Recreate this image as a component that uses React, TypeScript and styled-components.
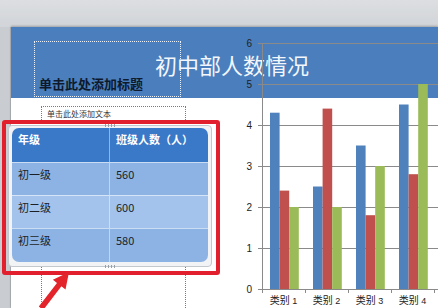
import React from "react";
import styled, { createGlobalStyle } from "styled-components";

const GlobalStyle = createGlobalStyle`
  html, body {
    margin: 0;
    padding: 0;
  }
  body {
    font-family: "Noto Sans CJK SC", "Liberation Sans", sans-serif;
    background: #d3d6da;
  }
  * {
    box-sizing: border-box;
  }
`;

const Page = styled.div`
  position: relative;
  width: 438px;
  height: 308px;
  overflow: hidden;
  display: flex;
  flex-direction: column;
  background: #d3d6da;
`;

const TopBand = styled.div`
  flex: none;
  height: 27px;
  background: linear-gradient(#dcdee1, #d1d4d8);
`;

const Workspace = styled.div`
  flex: 1;
  display: flex;
  min-height: 0;
`;

const SideStrip = styled.div`
  flex: none;
  width: 11px;
  background: #c9ccd0;
  border-right: 1px solid #b3b7bc;
`;

const Slide = styled.div`
  position: relative;
  flex: 1;
  display: flex;
  flex-direction: column;
  background: #ffffff;
  box-shadow: 0 -1px 2px rgba(0, 0, 0, 0.25);
`;

const TitleBar = styled.div`
  flex: none;
  height: 71px;
  display: grid;
  background: #4a7ebc;
`;

const TitlePlaceholder = styled.div`
  grid-area: 1 / 1;
  align-self: start;
  justify-self: start;
  margin: 14px 0 0 23px;
  width: 147px;
  height: 56px;
  display: flex;
  align-items: flex-end;
  padding: 0 0 4px 4px;
  border: 1px dotted rgba(255, 255, 255, 0.9);
  font-size: 13px;
  line-height: 17px;
  font-weight: 700;
  color: #0e1a2c;
`;

const TitleText = styled.div`
  grid-area: 1 / 1;
  align-self: start;
  justify-self: start;
  margin: 22px 0 0 144px;
  font-size: 22px;
  line-height: 30px;
  color: #f3f6fb;
`;

const Body = styled.div`
  flex: 1;
  display: flex;
  flex-direction: column;
  padding: 8px 0 0 30px;
`;

const TextPlaceholder = styled.div`
  flex: 1;
  width: 145px;
  padding: 2px 5px;
  border: 1px dotted #7a7a7a;
  border-bottom: none;
  font-size: 8px;
  line-height: 10px;
  color: #333;
`;

/* objects sitting on the slide canvas */
const TableObject = styled.div`
  position: absolute;
  left: -3px;
  top: 98px;
  width: 204px;
  padding: 2px 3px 4px;
  border: 1px solid #c3c8ce;
  border-radius: 4px;
  background: #f2f3f5;
`;

const Handle = styled.span<{ $edge: "top" | "bottom" }>`
  position: absolute;
  left: 96px;
  ${({ $edge }) => ($edge === "top" ? "top: -2px;" : "bottom: -2px;")}
  width: 10px;
  height: 3px;
  background: repeating-linear-gradient(90deg, #9aa0a7 0 1px, transparent 1px 3px);
`;

const Grid = styled.div`
  display: grid;
  grid-template-columns: 98px 98px;
  grid-template-rows: 34px 33px 33px 34px;
  border-radius: 7px;
  overflow: hidden;
`;

const Cell = styled.div<{ $kind: "head" | "odd" | "even"; $first?: boolean }>`
  padding: 3px 6px;
  font-size: 11px;
  line-height: 16px;
  font-weight: ${({ $kind }) => ($kind === "head" ? 700 : 400)};
  color: ${({ $kind }) => ($kind === "head" ? "#ffffff" : "#1b1f26")};
  background: ${({ $kind }) =>
    $kind === "head" ? "#3a78c8" : $kind === "odd" ? "#8db3e4" : "#a3c3ec"};
  border-top: ${({ $kind }) =>
    $kind === "head" ? "none" : "1px solid rgba(255, 255, 255, 0.55)"};
  border-right: ${({ $first }) =>
    $first ? "1px solid rgba(255, 255, 255, 0.45)" : "none"};
`;

const ChartBox = styled.svg`
  position: absolute;
  left: 225px;
  top: 6px;
  width: 202px;
  height: 275px;
  overflow: visible;
`;

/* annotations drawn over the screenshot */
const RedFrame = styled.div`
  position: absolute;
  left: 2px;
  top: 120px;
  width: 218px;
  height: 155px;
  border: 4px solid #e21f2c;
  border-radius: 3px;
`;

const ArrowSvg = styled.svg`
  position: absolute;
  left: 30px;
  top: 265px;
  width: 50px;
  height: 43px;
`;

const rows = [
  ["初一级", "560"],
  ["初二级", "600"],
  ["初三级", "580"],
];

const series = [
  { color: "#4f81bd", values: [4.3, 2.5, 3.5, 4.5] },
  { color: "#c0504d", values: [2.4, 4.4, 1.8, 2.8] },
  { color: "#9bbb59", values: [2, 2, 3, 5] },
];

const axisX = 262;
const zeroY = 289;
const unit = 41;
const groupW = 43;
const barW = 9.6;

function Chart() {
  const ticks = [0, 1, 2, 3, 4, 5, 6];
  return (
    <ChartBox viewBox="236 33 202 275">
      {ticks.map((t) => {
        const y = zeroY - t * unit + 0.5;
        return (
          <g key={t}>
            <line x1={axisX} x2={438} y1={y} y2={y} stroke="#8a8a8a" strokeWidth={1} />
            <line x1={axisX - 4} x2={axisX} y1={y} y2={y} stroke="#8a8a8a" strokeWidth={1} />
            <text
              x={252}
              y={y + 3.5}
              textAnchor="end"
              fontSize={10}
              fontFamily="'Liberation Sans', sans-serif"
              fill="#222"
            >
              {t}
            </text>
          </g>
        );
      })}
      {series.map((s, j) =>
        s.values.map((v, i) => (
          <rect
            key={`${j}-${i}`}
            x={axisX + groupW * i + 8 + j * barW}
            y={zeroY - v * unit}
            width={barW}
            height={v * unit}
            fill={s.color}
          />
        ))
      )}
      <line x1={axisX + 0.5} x2={axisX + 0.5} y1={43} y2={zeroY + 1} stroke="#8a8a8a" />
      {[0, 1, 2, 3, 4].map((i) => (
        <line
          key={i}
          x1={axisX + groupW * i + 0.5}
          x2={axisX + groupW * i + 0.5}
          y1={zeroY}
          y2={zeroY + 4}
          stroke="#8a8a8a"
        />
      ))}
      {[1, 2, 3, 4].map((n, i) => (
        <text
          key={n}
          x={axisX + groupW * i + groupW / 2}
          y={304}
          textAnchor="middle"
          fontSize={10}
          fill="#222"
          fontFamily="'Noto Sans CJK SC', sans-serif"
        >
          类别
          <tspan fontSize={9} fontFamily="'Liberation Sans', sans-serif">
            {" "}
            {n}
          </tspan>
        </text>
      ))}
    </ChartBox>
  );
}

export default function App() {
  return (
    <>
      <GlobalStyle />
      <Page>
        <TopBand />
        <Workspace>
          <SideStrip />
          <Slide>
            <TitleBar>
              <TitlePlaceholder>单击此处添加标题</TitlePlaceholder>
              <TitleText>初中部人数情况</TitleText>
            </TitleBar>
            <Body>
              <TextPlaceholder>单击此处添加文本</TextPlaceholder>
            </Body>
            <TableObject>
              <Handle $edge="top" />
              <Grid>
                <Cell $kind="head" $first>
                  年级
                </Cell>
                <Cell $kind="head">班级人数（人）</Cell>
                {rows.map(([grade, count], i) => (
                  <React.Fragment key={grade}>
                    <Cell $kind={i % 2 === 0 ? "odd" : "even"} $first>
                      {grade}
                    </Cell>
                    <Cell $kind={i % 2 === 0 ? "odd" : "even"}>{count}</Cell>
                  </React.Fragment>
                ))}
              </Grid>
              <Handle $edge="bottom" />
            </TableObject>
            <Chart />
          </Slide>
        </Workspace>
        <RedFrame />
        <ArrowSvg viewBox="30 265 50 43">
          <polygon
            points="69,272 65.5,289.5 61.4,286.3 43.2,310 38.8,306.5 57,282.9 52.9,279.7"
            fill="#e3242b"
          />
        </ArrowSvg>
      </Page>
    </>
  );
}
